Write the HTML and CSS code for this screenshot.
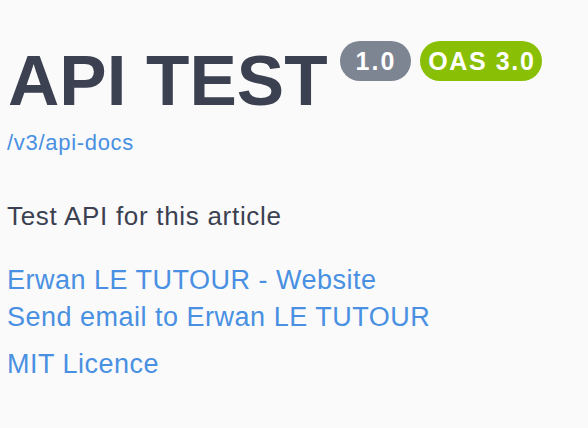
FILE: index.html
```html
<!DOCTYPE html>
<html>
<head>
<meta charset="utf-8">
<link rel="stylesheet" href="styles.css">
</head>
<body>
<div class="info">
  <div class="title-row">
    <h1 class="title">API TEST</h1>
    <div class="badges">
      <span class="badge version">1.0</span>
      <span class="badge oas">OAS 3.0</span>
    </div>
  </div>
  <a class="url" href="#">/v3/api-docs</a>
  <p class="description">Test API for this article</p>
  <div class="contact">
    <a class="link" href="#">Erwan LE TUTOUR - Website</a>
    <a class="link" href="#">Send email to Erwan LE TUTOUR</a>
  </div>
  <a class="link license" href="#">MIT Licence</a>
</div>
</body>
</html>
```
FILE: styles.css
```css
html, body {
  margin: 0;
  padding: 0;
  background: #fafafa;
}
body {
  font-family: "Liberation Sans", Arial, sans-serif;
  color: #3b4151;
}
.info {
  display: flex;
  flex-direction: column;
  align-items: flex-start;
  padding: 0 7px;
}
.title-row {
  display: flex;
  align-items: flex-start;
  gap: 12px;
  margin-top: 45px;
}
.title {
  margin: 0 0 0 1px;
  font-size: 71px;
  line-height: 71px;
  font-weight: 700;
  color: #3b4151;
}
.badges {
  display: flex;
  gap: 9px;
  margin-top: -4px;
}
.badge {
  display: flex;
  align-items: center;
  height: 40px;
  border-radius: 20px;
  color: #fff;
  font-size: 25px;
  font-weight: 700;
  line-height: 40px;
}
.version {
  background: #7d8492;
  padding: 0 15px 0 16px;
  letter-spacing: 2px;
}
.oas {
  background: #89bf04;
  padding: 0 7px 0 8px;
  letter-spacing: 1.6px;
}
a {
  color: #4990e2;
  text-decoration: none;
}
.url {
  margin-top: 16px;
  font-size: 22px;
  line-height: 21px;
  letter-spacing: 0.7px;
}
.description {
  margin: 51px 0 0;
  font-size: 26px;
  line-height: 25px;
  letter-spacing: 0.7px;
}
.contact {
  display: flex;
  flex-direction: column;
  gap: 12px;
  margin-top: 39px;
}
.link {
  font-size: 27px;
  line-height: 25px;
  letter-spacing: 0.5px;
}
.license {
  margin-top: 22px;
}
```
